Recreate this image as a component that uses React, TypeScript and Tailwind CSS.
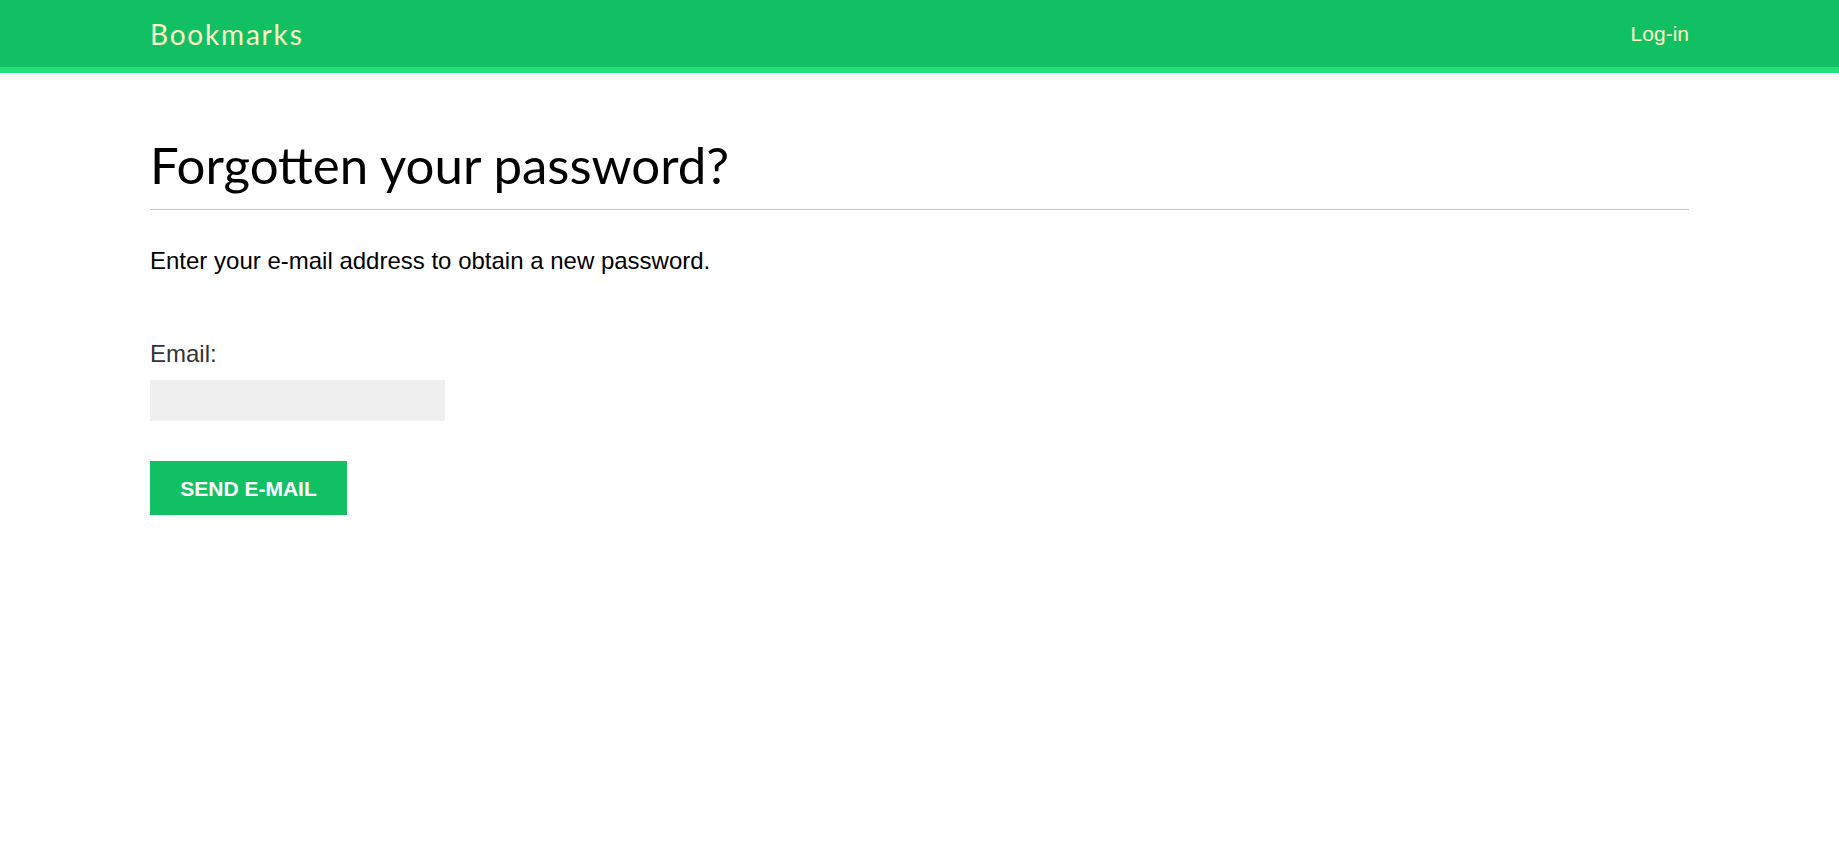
export default function App() {
  return (
    <div className="min-h-screen bg-white" style={{ fontFamily: '"Liberation Sans", Arial, sans-serif' }}>
      <header className="h-[73px] bg-[#12c064] border-b-[6px] border-[#1fe27a]">
        <div className="px-[150px] h-full flex items-center justify-between">
          <a href="#" className="text-[28px] text-[#fdf7c4] font-['Lato',sans-serif] leading-none tracking-[1.8px]">Bookmarks</a>
          <a href="#" className="text-[21px] text-[#fdf7c4] leading-none">Log-in</a>
        </div>
      </header>

      <main className="px-[150px]">
        <h1 className="mt-[61px] pb-[14px] text-[51px] leading-[1.2] text-black font-['Lato',sans-serif] font-normal border-b border-[#c4c4c4]">
          Forgotten your password?
        </h1>
        <p className="mt-[34px] text-[24px] leading-[1.4] text-black">
          Enter your e-mail address to obtain a new password.
        </p>

        <form className="mt-[59px]" onSubmit={(e) => e.preventDefault()}>
          <label className="block text-[24px] leading-[1.4] text-[#333]">Email:</label>
          <input type="email" className="mt-[10px] block w-[295px] h-[41px] bg-[#efefef] px-3 outline-none" />
          <button
            type="submit"
            className="mt-[40px] w-[197px] h-[54px] bg-[#12c064] text-white text-[21px] font-bold uppercase"
          >
            Send e-mail
          </button>
        </form>
      </main>
    </div>
  );
}
